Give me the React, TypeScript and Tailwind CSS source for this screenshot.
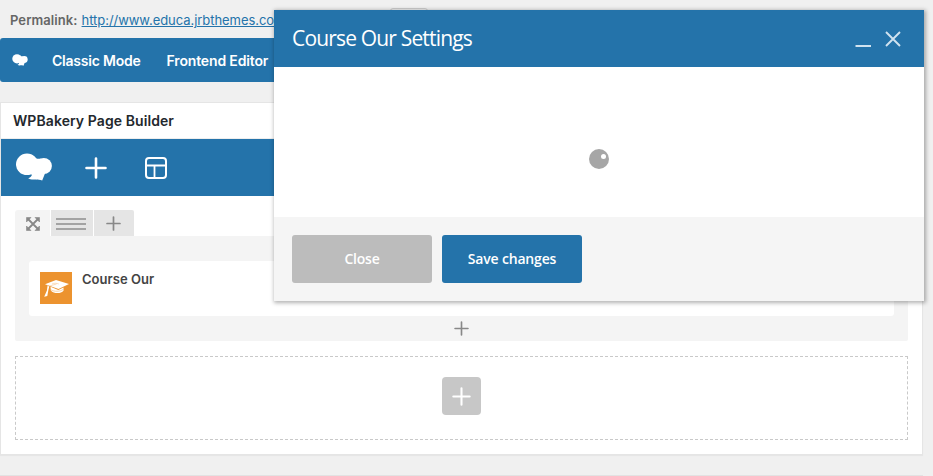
import React from "react";

function CloudMark({ className }: { className: string }) {
  return (
    <svg viewBox="0 0 36 28" className={className} fill="currentColor">
      <ellipse cx="11" cy="11.3" rx="11" ry="10.8" />
      <circle cx="27.8" cy="13" r="8.1" />
      <path d="M18 3.2C19.5 5.2 21.2 6.2 24.5 5.6L29 20.5L26.2 27.6C24 26.2 22 26.8 20 26.4C17 26.8 13.5 26.5 12.2 25.2C14 24.8 15.4 23.8 16 21.8L12 20Z" />
    </svg>
  );
}

function Plus({ className, width }: { className: string; width: number }) {
  return (
    <svg viewBox="0 0 22 22" className={className} fill="none" stroke="currentColor" strokeWidth={width} strokeLinecap="round">
      <path d="M11 1.5V20.5M1.5 11H20.5" />
    </svg>
  );
}

function TemplateIcon() {
  return (
    <svg viewBox="0 0 22 22" className="ml-[38px] size-[22px]" fill="none" stroke="white" strokeWidth="2">
      <rect x="1" y="1" width="20" height="20" rx="3" />
      <path d="M1 8.5H21M9.5 8.5V21" strokeWidth="1.8" />
    </svg>
  );
}

function MoveIcon() {
  return (
    <svg viewBox="0 0 14 14" className="size-[14px]" fill="#888" stroke="#888">
      <path d="M2 2L12 12M12 2L2 12" strokeWidth="1.8" fill="none" />
      <path d="M.5.5H5L.5 5ZM13.5.5V5L9 .5ZM.5 13.5V9L5 13.5ZM13.5 13.5H9L13.5 9Z" strokeWidth=".6" />
    </svg>
  );
}

function CapIcon() {
  return (
    <svg viewBox="0 0 32 32" className="size-8 shrink-0 bg-[#ec932f]">
      <path d="M5 12.3L16 8L29 12L18.5 17.1Z" fill="#fff" />
      <path d="M10.5 14.8L18.3 18L23.5 15.6V18.8C21 22 13.6 21.8 10.8 18.5Z" fill="#fff" />
      <path d="M11 17.8C14 19.8 20 19.8 23.2 17.4" fill="none" stroke="#ec932f" strokeWidth=".4" />
      <path d="M16.5 12L9.4 14" fill="none" stroke="#f6c58e" strokeWidth=".6" />
      <path d="M7.6 13.2L9.2 14.8L8.3 18.4L7.3 24L4.2 24.8L6.9 18.5Z" fill="#fff" />
      <path d="M12 12C14 10.8 17 11.2 18.8 12" fill="none" stroke="#f6c58e" strokeWidth=".6" />
    </svg>
  );
}

function SettingsDialog() {
  return (
    <section className="absolute left-[274px] top-[10px] flex h-[291px] w-[650px] flex-col bg-white font-['Open_Sans',sans-serif] shadow-[1px_1px_4px_1px_rgba(0,0,0,0.3)]">
      <header className="flex h-[57px] shrink-0 items-center bg-[#2473aa] pl-[18px] text-white">
        <h2 className="text-[21px] leading-[57px] tracking-[-0.83px]">Course Our Settings</h2>
        <svg viewBox="0 0 48 18" className="ml-auto mr-[22px] mt-[1px] h-[18px] w-12" fill="none" stroke="#d0e3f0" strokeWidth="2">
          <path d="M1.5 16H17" />
          <path d="M32 2L46 16M46 2L32 16" strokeWidth="1.9" />
        </svg>
      </header>
      <div className="flex h-[150px] items-center justify-center pt-[34px]">
        <span className="flex size-5 items-start justify-end rounded-full bg-[#a6a6a6] pr-[3px] pt-[5px]">
          <span className="size-[5px] rounded-full bg-white" />
        </span>
      </div>
      <footer className="flex flex-1 gap-[10px] bg-[#f5f5f5] px-[18px] pt-[18px] text-[14px] font-semibold text-white">
        <button className="h-12 w-[140px] rounded-[3px] bg-[#bcbcbc] pb-[2px] tracking-[-0.2px]">Close</button>
        <button className="h-12 w-[140px] rounded-[3px] bg-[#2473aa] pb-[2px] tracking-[-0.18px]">Save changes</button>
      </footer>
    </section>
  );
}

export default function App() {
  return (
    <main className="relative flex h-[476px] w-[933px] flex-col overflow-hidden bg-[#f0f0f0] font-['Inter',sans-serif]">
      <div className="flex h-[38px] shrink-0 gap-1 pl-[10px] pt-[11px] text-[13px] leading-[18px]">
        <strong className="font-semibold tracking-[0.08px] text-[#666]">Permalink:</strong>
        <a className="whitespace-nowrap tracking-[-0.05px] text-[#2473aa] underline">http://www.educa.jrbthemes.com/course</a>
        <span className="absolute left-[390px] top-2 h-6 w-[38px] rounded-[3px] border border-[#ccc]" />
      </div>
      <nav className="flex h-11 w-[923px] shrink-0 items-center rounded-[3px] bg-[#2473aa] pl-3 text-[14px] font-semibold text-white">
        <CloudMark className="h-3 w-4" />
        <span className="ml-6 tracking-[-0.22px]">Classic Mode</span>
        <span className="ml-[26px] tracking-[-0.15px]">Frontend Editor</span>
      </nav>
      <section className="mt-5 flex h-[353px] w-[923px] shrink-0 flex-col border border-[#e5e5e5] bg-white shadow-[0_1px_1px_rgba(0,0,0,0.04)]">
        <h2 className="h-9 shrink-0 border-b border-[#eee] pl-3 text-[14px] font-semibold leading-[36px] tracking-[0.08px] text-[#23282d]">WPBakery Page Builder</h2>
        <div className="flex h-[57px] shrink-0 items-center bg-[#2473aa] pl-[15px] text-white">
          <CloudMark className="-mt-[2px] h-7 w-9" />
          <Plus width={2.6} className="ml-[33px] size-[22px]" />
          <TemplateIcon />
        </div>
        <div className="mt-[14px] flex h-[26px] shrink-0 gap-px pl-[14px] text-[#888]">
          <span className="flex w-[35px] items-center justify-center rounded-tl-[3px] bg-[#f4f4f4] pt-px"><MoveIcon /></span>
          <span className="flex w-[42px] flex-col items-center justify-center gap-[3px] bg-[#e5e5e5] pr-[2px] pt-px">
            <i className="h-[2px] w-[30px] bg-[#a3a3a3]" />
            <i className="h-[2px] w-[30px] bg-[#a3a3a3]" />
            <i className="h-[2px] w-[30px] bg-[#a3a3a3]" />
          </span>
          <span className="flex w-10 items-center justify-center rounded-tr-[2px] bg-[#e5e5e5] pr-px"><Plus width={2.5} className="size-[15px]" /></span>
        </div>
        <div className="mx-[14px] flex h-[105px] shrink-0 flex-col items-center rounded-b-[2px] bg-[#f4f4f4] px-[14px] pt-[25px] text-[#888]">
          <div className="flex h-[55px] w-full shrink-0 gap-[10px] rounded-[3px] bg-white pl-[11px] pt-[11px]">
            <CapIcon />
            <strong className="-mt-px text-[13px] font-semibold leading-4 tracking-[0.03px] text-[#444]">Course Our</strong>
          </div>
          <Plus width={2.4} className="mt-[5px] size-[15px]" />
        </div>
        <div className="mx-[14px] mt-[15px] flex h-[84px] shrink-0 items-center justify-center border border-dashed border-[#c9c9c9]">
          <span className="mb-1 flex h-[38px] w-[39px] items-center justify-center rounded-[4px] bg-[#c7c7c7] text-white"><Plus width={2.4} className="size-[19px]" /></span>
        </div>
      </section>
      <div className="mt-5 h-px w-[923px] shrink-0 bg-[#e2e2e2]" />
      <SettingsDialog />
    </main>
  );
}
